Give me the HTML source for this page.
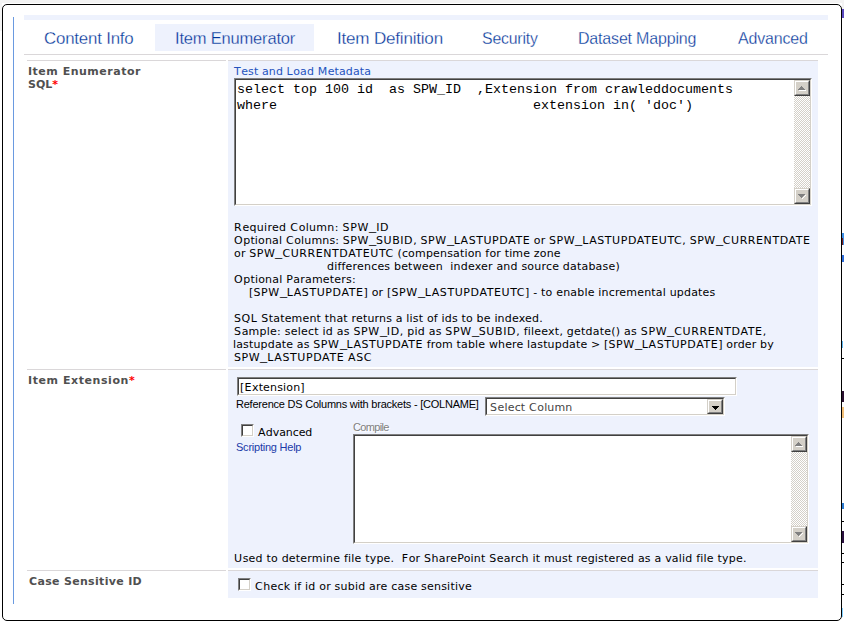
<!DOCTYPE html>
<html><head><meta charset="utf-8">
<title>Item Enumerator</title>
<style>
html,body{margin:0;padding:0;}
body{width:844px;height:622px;overflow:hidden;background:#fff;position:relative;font-family:"DejaVu Sans","Liberation Sans",sans-serif;font-size:11px;color:#000;}
.abs{position:absolute;}
#frame{left:2px;top:4px;width:838px;height:615px;border:1px solid #000;border-radius:5px;background:#fff;}
.band{background:#eef2fd;}
.hl{background:#dad7d9;height:1px;}
.tab{position:absolute;transform-origin:0 0;height:22px;line-height:22px;font-family:"Liberation Sans",sans-serif;font-size:17px;color:#003399;white-space:nowrap;-webkit-text-stroke:0.3px #fff;}
#tab1{-webkit-text-stroke-color:#eef2fd;}
.lbl{position:absolute;font-weight:bold;color:#505050;font-size:11px;line-height:13px;white-space:nowrap;}
.t{position:absolute;white-space:nowrap;font-size:11px;line-height:13px;color:#000;}
.red{color:#f00;}
.tab,.lbl,.t,.mono{letter-spacing:var(--l);}
.c{letter-spacing:calc(var(--l) + 0.4px);}
.u{display:inline-block;width:7px;transform:translateY(-1px) scaleX(1.3);transform-origin:0 0;letter-spacing:0;}
.inset{position:absolute;box-sizing:border-box;background:#fff;border:1px solid;border-color:#808080 #fff #fff #808080;}
.inset:before{content:"";position:absolute;left:0;top:0;right:0;bottom:0;border:1px solid;border-color:#404040 #d4d0c8 #d4d0c8 #404040;}
.mono{font-family:"Liberation Mono",monospace;font-size:13.33px;line-height:16px;white-space:pre;color:#000;position:absolute;}
.sb{position:absolute;width:16px;background-color:#fff;background-image:linear-gradient(45deg,#d4d0c8 25%,transparent 25%,transparent 75%,#d4d0c8 75%),linear-gradient(45deg,#d4d0c8 25%,transparent 25%,transparent 75%,#d4d0c8 75%);background-size:2px 2px;background-position:0 0,1px 1px;}
.btn{position:absolute;width:16px;height:16px;box-sizing:border-box;background:#d4d0c8;border:1px solid;border-color:#d4d0c8 #404040 #404040 #d4d0c8;}
.btn:before{content:"";position:absolute;left:0;top:0;right:0;bottom:0;border:1px solid;border-color:#fff #808080 #808080 #fff;}
.btn svg{position:absolute;left:0;top:0;}
</style></head><body>
<div class="abs" style="left:0;top:0;width:844px;height:3px;background:#f3f3f3;"></div>
<div class="abs" style="left:0;top:0;width:2px;height:31px;background:#f3f3f3;"></div>
<div class="abs" style="left:842px;top:0;width:2px;height:9px;background:#f3f3f3;"></div>
<!-- clipped fragments of the page behind the dialog, right of the frame -->
<div class="abs" style="left:842px;top:9px;width:2px;height:9px;background:#5a4ac0;"></div>
<div class="abs" style="left:842px;top:233px;width:2px;height:12px;background:#3a8ee6;"></div>
<div class="abs" style="left:842px;top:238px;width:1px;height:7px;background:#7a1a1a;"></div>
<div class="abs" style="left:842px;top:255px;width:2px;height:7px;background:#2a6ad8;"></div>
<div class="abs" style="left:842px;top:341px;width:1px;height:7px;background:#60b8f0;"></div>
<div class="abs" style="left:842px;top:358px;width:2px;height:1px;background:#000;"></div>
<div class="abs" style="left:842px;top:391px;width:2px;height:11px;background:#2a1030;"></div>
<div class="abs" style="left:842px;top:407px;width:2px;height:11px;background:#f3c078;"></div>
<div class="abs" style="left:842px;top:503px;width:2px;height:6px;background:#2a7ad0;"></div>
<div class="abs" style="left:842px;top:521px;width:2px;height:1px;background:#000;"></div>
<div class="abs" style="left:842px;top:531px;width:2px;height:12px;background:#2a1040;"></div>
<div class="abs" style="left:842px;top:553px;width:2px;height:1px;background:#000;"></div>
<div class="abs" style="left:842px;top:562px;width:2px;height:1px;background:#000;"></div>
<div class="abs" style="left:842px;top:584px;width:2px;height:1px;background:#000;"></div>
<div class="abs" style="left:842px;top:594px;width:2px;height:1px;background:#000;"></div>
<div class="abs" style="left:842px;top:608px;width:1px;height:9px;background:#80d0ff;"></div>
<div class="abs" id="frame"></div>
<div class="abs band" style="left:24px;top:15px;width:804px;height:5px;"></div>
<div class="abs" style="left:13px;top:17px;width:1px;height:587px;background:#6a9ae0;"></div>
<div class="abs band" style="left:155px;top:24px;width:159px;height:27px;"></div>
<div class="abs hl" style="left:24px;top:54px;width:804px;"></div>

<!-- row 1 -->
<div class="abs hl" style="left:27px;top:60px;width:199px;"></div>
<div class="abs band" style="left:228px;top:60px;width:590px;height:307px;"></div>
<div class="abs hl" style="left:228px;top:60px;width:590px;"></div>
<div class="inset" style="left:234px;top:78px;width:578px;height:128px;"></div>
<div class="sb" style="left:794px;top:80px;height:124px;"></div>
<div class="btn" style="left:794px;top:80px;"><svg width="14" height="14" viewBox="0 0 14 14"><path d="M4 9h7v1h-7z" fill="#fff"/><path d="M6 5h1v1h1v1h1v1h1v1h-7v-1h1v-1h1v-1h1z" fill="#808080"/></svg></div>
<div class="btn" style="left:794px;top:188px;"><svg width="14" height="14" viewBox="0 0 14 14"><path d="M7 9h1v-1h1v-1h1v-1h1v1h-1v1h-1v1h-1v1h-1z" fill="#fff"/><path d="M3 5h7v1h-1v1h-1v1h-1v1h-1v-1h-1v-1h-1v-1h-1z" fill="#808080"/></svg></div>

<!-- row 2 -->
<div class="abs hl" style="left:27px;top:369px;width:199px;"></div>
<div class="abs band" style="left:228px;top:369px;width:590px;height:199px;"></div>
<div class="abs hl" style="left:228px;top:369px;width:590px;"></div>
<div class="inset" style="left:237px;top:377px;width:500px;height:19px;"></div>
<div class="inset" style="left:485px;top:397px;width:240px;height:19px;"></div>
<div class="btn" style="left:707px;top:399px;height:15px;"><svg width="14" height="13" viewBox="0 0 14 13"><path d="M4 6h7v1h-1v1h-1v1h-1v1h-1v-1h-1v-1h-1v-1h-1z" fill="#000"/></svg></div>
<div class="inset" style="left:241px;top:424px;width:13px;height:13px;"></div>
<div class="inset" style="left:353px;top:434px;width:456px;height:110px;"></div>
<div class="sb" style="left:791px;top:436px;height:106px;"></div>
<div class="btn" style="left:791px;top:436px;"><svg width="14" height="14" viewBox="0 0 14 14"><path d="M4 9h7v1h-7z" fill="#fff"/><path d="M6 5h1v1h1v1h1v1h1v1h-7v-1h1v-1h1v-1h1z" fill="#808080"/></svg></div>
<div class="btn" style="left:791px;top:526px;"><svg width="14" height="14" viewBox="0 0 14 14"><path d="M7 9h1v-1h1v-1h1v-1h1v1h-1v1h-1v1h-1v1h-1z" fill="#fff"/><path d="M3 5h7v1h-1v1h-1v1h-1v1h-1v-1h-1v-1h-1v-1h-1z" fill="#808080"/></svg></div>

<!-- row 3 -->
<div class="abs hl" style="left:27px;top:570px;width:199px;"></div>
<div class="abs band" style="left:228px;top:570px;width:590px;height:28px;"></div>
<div class="abs hl" style="left:228px;top:570px;width:590px;"></div>
<div class="inset" style="left:238px;top:578px;width:13px;height:13px;"></div>
<div id="tab0" class="tab" style="left:44px;top:28px;--l:-0.200px;transform:scaleX(0.9920);">Content Info</div>
<div id="tab1" class="tab" style="left:175px;top:28px;--l:-0.200px;transform:scaleX(0.9714);">Item Enumerator</div>
<div id="tab2" class="tab" style="left:337px;top:28px;--l:-0.200px;transform:scaleX(1.0025);">Item Definition</div>
<div id="tab3" class="tab" style="left:482px;top:28px;--l:-0.200px;transform:scaleX(0.9320);">Security</div>
<div id="tab4" class="tab" style="left:578px;top:28px;--l:-0.200px;transform:scaleX(0.9417);">Dataset Mapping</div>
<div id="tab5" class="tab" style="left:738px;top:28px;--l:-0.200px;transform:scaleX(0.9409);">Advanced</div>
<div id="lbl1a" class="lbl" style="left:28px;top:65px;--l:0.508px;">Item Enumerator</div>
<div id="lbl1b" class="lbl" style="left:28px;top:78px;--l:-0.034px;">SQL<span class="red">*</span></div>
<div id="lnk" class="t" style="left:234px;top:65px;--l:0.109px;color:#2452bd;"><span class="c">T</span>est and <span class="c">L</span>oad <span class="c">M</span>etadata</div>
<div id="mono1" class="mono" style="left:237px;top:82px;--l:0.000px;">select top 100 id  as SPW_ID  ,Extension from crawleddocuments</div>
<div id="mono2" class="mono" style="left:237px;top:98px;--l:0.000px;">where                                extension in( 'doc')</div>
<div id="d1" class="t" style="left:234px;top:221px;--l:0.317px;"><span class="c">R</span>equired <span class="c">C</span>olumn: <span class="c">SPW</span><span class="u">_</span><span class="c">ID</span></div>
<div id="d2" class="t" style="left:234px;top:234px;--l:0.162px;"><span class="c">O</span>ptional <span class="c">C</span>olumns: <span class="c">SPW</span><span class="u">_</span><span class="c">SUBID</span>, <span class="c">SPW</span><span class="u">_</span><span class="c">LASTUPDATE</span> or <span class="c">SPW</span><span class="u">_</span><span class="c">LASTUPDATEUTC</span>, <span class="c">SPW</span><span class="u">_</span><span class="c">CURRENTDATE</span></div>
<div id="d3" class="t" style="left:234px;top:247px;--l:0.169px;">or <span class="c">SPW</span><span class="u">_</span><span class="c">CURRENTDATEUTC</span> (compensation for time zone</div>
<div id="d4" class="t" style="left:327px;top:260px;--l:0.197px;">differences between&nbsp; indexer and source database)</div>
<div id="d5" class="t" style="left:234px;top:273px;--l:0.191px;"><span class="c">O</span>ptional <span class="c">P</span>arameters:</div>
<div id="d6" class="t" style="left:249px;top:286px;--l:0.186px;">[<span class="c">SPW</span><span class="u">_</span><span class="c">LASTUPDATE</span>] or [<span class="c">SPW</span><span class="u">_</span><span class="c">LASTUPDATEUTC</span>] - to enable incremental updates</div>
<div id="d7" class="t" style="left:234px;top:312px;--l:0.178px;"><span class="c">SQL</span> <span class="c">S</span>tatement that returns a list of ids to be indexed.</div>
<div id="d8" class="t" style="left:234px;top:325px;--l:0.231px;"><span class="c">S</span>ample: select id as <span class="c">SPW</span><span class="u">_</span><span class="c">ID</span>, pid as <span class="c">SPW</span><span class="u">_</span><span class="c">SUBID</span>, fileext, getdate() as <span class="c">SPW</span><span class="u">_</span><span class="c">CURRENTDATE</span>,</div>
<div id="d9" class="t" style="left:233px;top:338px;--l:0.160px;">lastupdate as <span class="c">SPW</span><span class="u">_</span><span class="c">LASTUPDATE</span> from table where lastupdate &gt; [<span class="c">SPW</span><span class="u">_</span><span class="c">LASTUPDATE</span>] order by</div>
<div id="d10" class="t" style="left:234px;top:351px;--l:0.206px;"><span class="c">SPW</span><span class="u">_</span><span class="c">LASTUPDATE</span> <span class="c">ASC</span></div>
<div id="lbl2" class="lbl" style="left:28px;top:374px;--l:0.571px;">Item Extension<span class="red">*</span></div>
<div id="ext" class="t" style="left:240px;top:381px;--l:0.160px;">[<span class="c">E</span>xtension]</div>
<div id="ref" class="t" style="left:236px;top:398px;--l:-0.226px;font-family:'Liberation Sans',sans-serif;">Reference DS Columns with brackets - [COLNAME]</div>
<div id="sel" class="t" style="left:490px;top:401px;--l:0.163px;color:#444;"><span class="c">S</span>elect <span class="c">C</span>olumn</div>
<div id="adv" class="t" style="left:258px;top:426px;--l:-0.083px;"><span class="c">A</span>dvanced</div>
<div id="shelp" class="t" style="left:236px;top:441px;--l:-0.230px;color:#1a3aa8;font-family:'Liberation Sans',sans-serif;">Scripting Help</div>
<div id="comp" class="t" style="left:353px;top:421px;--l:-0.667px;color:#808080;text-shadow:1px 1px 0 #fff;font-family:'Liberation Sans',sans-serif;">Compile</div>
<div id="used" class="t" style="left:234px;top:552px;--l:0.208px;"><span class="c">U</span>sed to determine file type.&nbsp; <span class="c">F</span>or <span class="c">S</span>harePoint <span class="c">S</span>earch it must registered as a valid file type.</div>
<div id="lbl3" class="lbl" style="left:29px;top:575px;--l:0.321px;">Case Sensitive ID</div>
<div id="chk" class="t" style="left:255px;top:580px;--l:0.211px;"><span class="c">C</span>heck if id or subid are case sensitive</div>

</body></html>
